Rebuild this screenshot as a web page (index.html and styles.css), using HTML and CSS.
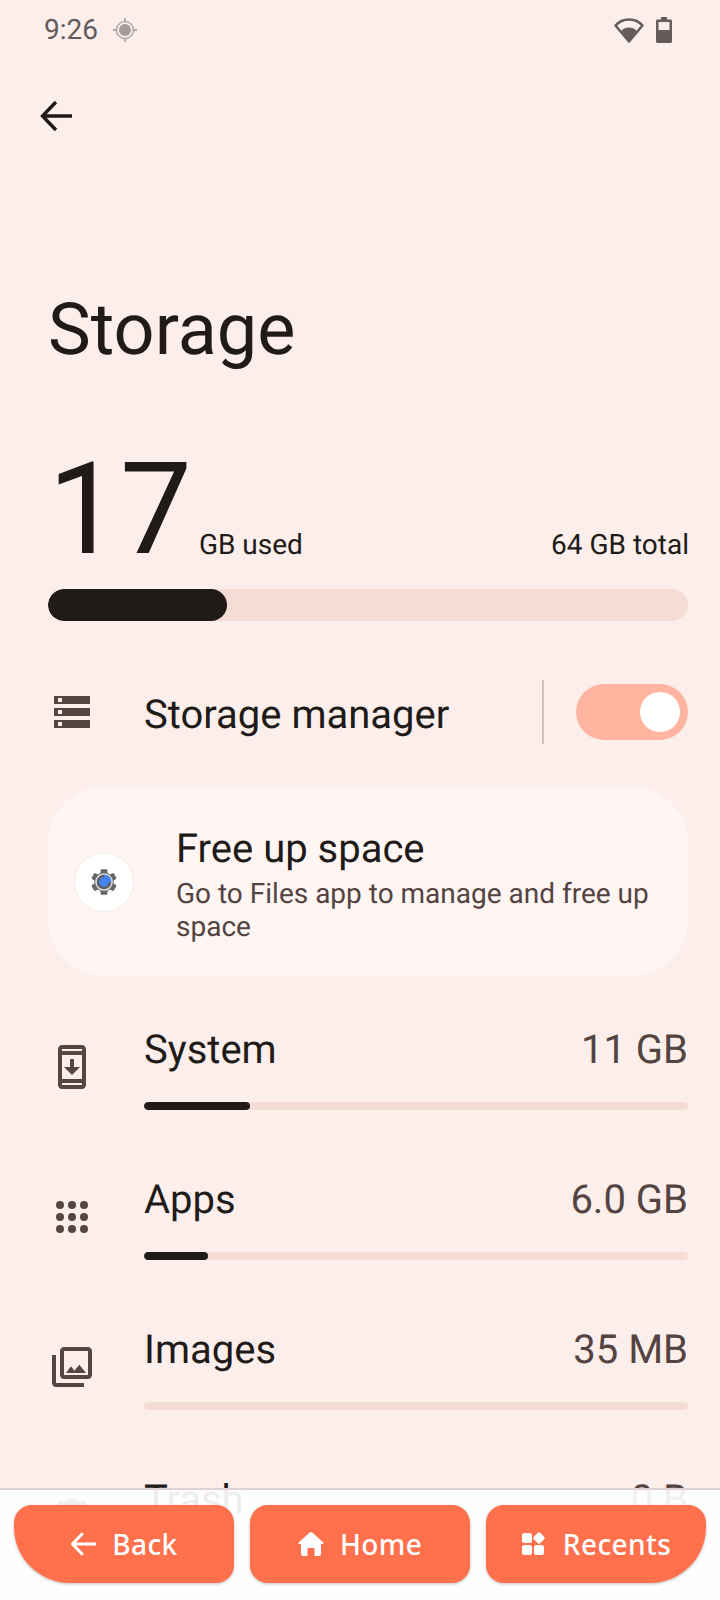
FILE: index.html
```html
<!DOCTYPE html>
<html lang="en">
<head>
<meta charset="utf-8">
<title>Storage</title>
<link rel="stylesheet" href="styles.css">
</head>
<body>
<div class="screen">
  <div class="status">
    <span class="clock">9:26</span>
    <svg class="loc" viewBox="0 0 24 24"><circle cx="12" cy="12" r="6" fill="#a69c99"/><circle cx="12" cy="12" r="8.5" fill="none" stroke="#b5acaa" stroke-width="1.6"/><path d="M12 0v4M12 20v4M0 12h4M20 12h4" stroke="#b5acaa" stroke-width="2"/></svg>
    <span class="grow"></span>
    <svg class="wifi" viewBox="0 0 30 26"><path d="M15 24.5 1.5 8.5C5 4.500 10 2.500 15 2.500s10 2 13.500 6z" fill="none" stroke="#635c5a" stroke-width="2.500" stroke-linejoin="round"/><path d="M15 25 7.500 13.500C9.500 11.500 12 10.500 15 10.500s5.500 1 7.500 3z" fill="#635c5a"/></svg>
    <svg class="batt" viewBox="0 0 16 26"><path d="M5 0h6v2.500h3.500c.8 0 1.500.7 1.500 1.500v20.500c0 .8-.7 1.500-1.500 1.500h-13C.7 26 0 25.300 0 24.500V4c0-.8.7-1.500 1.500-1.500H5z" fill="#635c5a"/><rect x="2.500" y="5" width="11" height="8" fill="#fceeea"/></svg>
  </div>
  <div class="toolbar">
    <svg class="back" viewBox="0 0 32 32"><path d="M32 16H3M16 2 2.500 16 16 30" fill="none" stroke="#201a18" stroke-width="3.400"/></svg>
  </div>
  <h1 class="title">Storage</h1>
  <div class="usage">
    <span class="big">17</span>
    <span class="unit">GB used</span>
    <span class="grow"></span>
    <span class="unit">64 GB total</span>
  </div>
  <div class="track main"><div class="fill" style="width:28%"></div></div>
  <div class="manager">
    <span class="icon">
      <svg class="stack" viewBox="0 0 36 32"><path fill-rule="evenodd" d="M0 0h36v8H0zM4 2v4h4V2zM0 12h36v8H0zM4 14v4h4v-4zM0 24h36v8H0zM4 26v4h4v-4z" fill="#574540"/></svg>
    </span>
    <span class="name">Storage manager</span>
    <span class="divider"></span>
    <span class="switch"><span class="thumb"></span></span>
  </div>
  <div class="card">
    <span class="badge">
      <svg class="gear" viewBox="0 0 24 24"><path d="M19.140 12.940c.04-.3.06-.61.06-.94 0-.32-.02-.64-.07-.94l2.030-1.580c.18-.14.23-.41.12-.61l-1.920-3.320c-.12-.22-.37-.29-.59-.22l-2.390.96c-.5-.38-1.030-.7-1.620-.94l-.36-2.540c-.04-.24-.24-.41-.48-.41h-3.840c-.24 0-.43.17-.47.41l-.36 2.540c-.59.24-1.130.57-1.620.94l-2.390-.96c-.22-.08-.47 0-.59.22L2.740 8.870c-.12.21-.08.47.12.61l2.030 1.580c-.05.3-.09.63-.09.94s.02.64.07.94l-2.030 1.580c-.18.14-.23.41-.12.61l1.920 3.320c.12.22.37.29.59.22l2.390-.96c.5.38 1.030.7 1.620.94l.36 2.540c.05.24.24.41.48.41h3.840c.24 0 .44-.17.47-.41l.36-2.540c.59-.24 1.130-.56 1.620-.94l2.390.96c.22.08.47 0 .59-.22l1.920-3.320c.12-.22.07-.47-.12-.61l-2.010-1.580z" fill="#686868"/><circle cx="12" cy="12" r="6" fill="none" stroke="#e0e0e0" stroke-width="1.200"/><circle cx="12" cy="12" r="5.400" fill="#5f6368"/><path d="M12 6.500a5.500 5.500 0 0 1 5.500 5.500H12z" fill="#4285f4"/><circle cx="12" cy="12" r="3.500" fill="#4285f4"/></svg>
    </span>
    <div class="card-text">
      <div class="card-title">Free up space</div>
      <div class="card-sub">Go to Files app to manage and free up space</div>
    </div>
  </div>
  <div class="rows">
    <div class="row">
      <span class="icon"><svg class="mi" viewBox="0 0 24 24"><path d="M17 1.010L7 1c-1.100 0-2 .9-2 2v18c0 1.100.9 2 2 2h10c1.100 0 2-.9 2-2V3c0-1.100-.9-1.990-2-1.990zM17 21H7v-1h10v1zm0-3H7V6h10v12zm0-14H7V3h10v1zM16 12h-3V8h-2v4H8l4 4z"/></svg></span>
      <div class="row-body">
        <div class="row-head"><span class="name">System</span><span class="size">11 GB</span></div>
        <div class="track thin"><div class="fill" style="width:19.500%"></div></div>
      </div>
    </div>
    <div class="row">
      <span class="icon"><svg class="mi" viewBox="0 0 48 48"><circle cx="12" cy="12" r="4"/><circle cx="24" cy="12" r="4"/><circle cx="36" cy="12" r="4"/><circle cx="12" cy="24" r="4"/><circle cx="24" cy="24" r="4"/><circle cx="36" cy="24" r="4"/><circle cx="12" cy="36" r="4"/><circle cx="24" cy="36" r="4"/><circle cx="36" cy="36" r="4"/></svg></span>
      <div class="row-body">
        <div class="row-head"><span class="name">Apps</span><span class="size">6.0 GB</span></div>
        <div class="track thin"><div class="fill" style="width:11.800%"></div></div>
      </div>
    </div>
    <div class="row">
      <span class="icon"><svg class="mi" viewBox="0 0 24 24"><path d="M20 4v12H8V4h12m0-2H8c-1.100 0-2 .9-2 2v12c0 1.100.9 2 2 2h12c1.100 0 2-.9 2-2V4c0-1.100-.9-2-2-2zm-8.500 9.670l1.690 2.260 2.480-3.100L19 15H9zM2 6v14c0 1.100.9 2 2 2h14v-2H4V6H2z"/></svg></span>
      <div class="row-body">
        <div class="row-head"><span class="name">Images</span><span class="size">35 MB</span></div>
        <div class="track thin"></div>
      </div>
    </div>
    <div class="row">
      <span class="icon"><svg class="mi" viewBox="0 0 24 24"><path d="M6 19c0 1.100.9 2 2 2h8c1.100 0 2-.9 2-2V7H6v12zM8 9h8v10H8V9zm7.500-5l-1-1h-5l-1 1H5v2h14V4z"/></svg></span>
      <div class="row-body">
        <div class="row-head"><span class="name">Trash</span><span class="size">0 B</span></div>
        <div class="track thin"></div>
      </div>
    </div>
  </div>
  <div class="navbar">
    <button class="nav first">
      <svg class="nav-icon" viewBox="0 0 26 24"><path d="M25 12H3M12 2 2.500 12 12 22" fill="none" stroke="#fff" stroke-width="3" stroke-linecap="round" stroke-linejoin="round"/></svg>
      <span>Back</span>
    </button>
    <button class="nav">
      <svg class="nav-icon" viewBox="0 0 26 24"><path d="M11.700.6a2 2 0 0 1 2.600 0l11 9.800c.7.6.3 1.600-.6 1.600H23v10a2 2 0 0 1-2 2h-4.500v-7a1 1 0 0 0-1-1h-5a1 1 0 0 0-1 1v7H5a2 2 0 0 1-2-2V12H1.300c-.9 0-1.300-1-.6-1.600z" fill="#fff"/></svg>
      <span>Home</span>
    </button>
    <button class="nav last">
      <svg class="nav-icon" viewBox="0 0 24 24"><rect x="0" y="1" width="10" height="10" rx="2.500" fill="#fff"/><rect x="0" y="13" width="10" height="10" rx="2.500" fill="#fff"/><rect x="12" y="13" width="10" height="10" rx="2.500" fill="#fff"/><rect x="12.500" y="1.500" width="9" height="9" rx="2" fill="#fff" transform="rotate(45 17 6)"/></svg>
      <span>Recents</span>
    </button>
  </div>
</div>
</body>
</html>
```
FILE: styles.css
```css
* { box-sizing: border-box; }
html, body { margin: 0; padding: 0; }
body { font-family: Roboto, "Noto Sans", sans-serif; background: #fceeea; text-rendering: geometricPrecision; }
.screen { position: relative; width: 720px; height: 1600px; overflow: hidden; background: #fceeea; color: #201a18; }
.grow { flex: 1; }
.status { display: flex; align-items: center; height: 60px; padding: 0 48px 0 44px; }
.clock { font-size: 28px; line-height: 60px; color: #635c5a; }
.loc { width: 24px; height: 24px; margin-left: 15px; }
.wifi { width: 30px; height: 26px; margin-right: 12px; }
.batt { width: 16px; height: 26px; }
.toolbar { height: 84px; padding: 40px 0 0 40px; display: flex; }
.back { width: 32px; height: 32px; }
.title { margin: 144px 0 0; padding-left: 48px; font-size: 72px; font-weight: 400; line-height: 84px; height: 84px; }
.usage { display: flex; align-items: baseline; padding: 0 31px 0 48px; margin-top: 63px; }
.big { font-size: 128px; line-height: 150px; margin-right: 7px; }
.unit { font-size: 28px; font-weight: 385; position: relative; top: 1px; }
.track { background: #f5ddd6; overflow: hidden; }
.fill { background: #201a18; height: 100%; }
.main { height: 32px; margin: 4px 32px 0 48px; border-radius: 16px; }
.main .fill { border-radius: 16px; }
.manager { display: flex; align-items: center; height: 64px; margin-top: 59px; padding: 0 32px 0 48px; }
.icon { width: 48px; height: 48px; flex: none; display: flex; align-items: center; justify-content: center; }
.stack { width: 36px; height: 32px; }
.name { font-size: 40px; line-height: 48px; font-weight: 385; }
.manager .name { margin: 6px 0 0 48px; }
.manager .divider { width: 2px; height: 64px; background: #d8c2bc; margin-left: auto; }
.switch { width: 112px; height: 56px; border-radius: 28px; background: #ffb5a0; margin-left: 32px; display: flex; justify-content: flex-end; align-items: center; padding-right: 8px; }
.thumb { width: 40px; height: 40px; border-radius: 50%; background: #fff; }
.card { display: flex; align-items: center; height: 189px; margin: 43px 32px 0 48px; border-radius: 56px; background: #fff6f3; padding: 0 32px 0 27px; }
.badge { width: 58px; height: 58px; flex: none; border-radius: 50%; background: #fff; box-shadow: 0 0 2px rgba(0,0,0,.12); display: flex; align-items: center; justify-content: center; }
.gear { width: 32px; height: 32px; }
.card-text { margin-left: 43px; padding-top: 4px; }
.card-title { font-size: 40px; line-height: 48px; font-weight: 385; }
.card-sub { font-size: 28px; line-height: 33px; color: #534341; margin-top: 4px; font-weight: 385; }
.rows { margin-top: 15px; }
.row { display: flex; height: 150px; padding: 0 32px 0 48px; }
.row .icon { margin-top: 52px; }
.row-body { flex: 1; margin-left: 48px; padding-top: 35px; }
.row-head { display: flex; justify-content: space-between; align-items: baseline; height: 48px; }
.size { font-size: 40px; line-height: 48px; color: #534341; font-weight: 385; }
.thin { height: 8px; border-radius: 4px; margin-top: 28px; }
.thin .fill { border-radius: 4px; }
.mi { width: 48px; height: 48px; fill: #574540; }
.navbar { position: absolute; left: 0; right: 0; bottom: 0; top: 1488px; background: rgba(255,255,255,.92); border-top: 2px solid #ddd3d0; display: flex; gap: 16px; padding: 15px 14px 0; }
.nav { flex: 1; height: 78px; border: 0; background: #ff704d; color: #fff; border-radius: 18px; display: flex; align-items: center; justify-content: center; gap: 16px; font-family: "Noto Sans", sans-serif; font-weight: 500; font-size: 28px; letter-spacing: .4px; padding: 0; box-shadow: 0 1px 3px rgba(0,0,0,.25); }
.first { border-bottom-left-radius: 56px; }
.last { border-bottom-right-radius: 56px; }
.nav-icon { width: 26px; height: 24px; }
```
